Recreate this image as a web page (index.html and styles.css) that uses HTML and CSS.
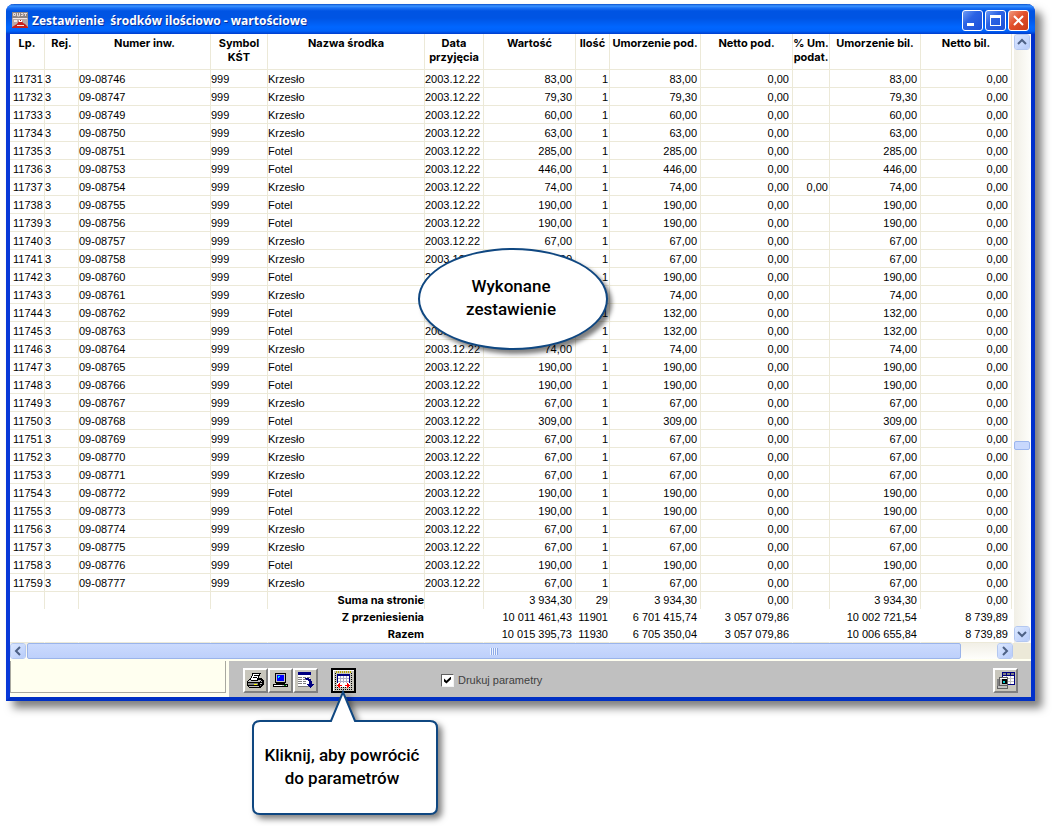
FILE: index.html
```html
<!DOCTYPE html>
<html lang="pl">
<head>
<meta charset="utf-8">
<title>Zestawienie środków ilościowo - wartościowe</title>
<link rel="stylesheet" href="styles.css">
</head>
<body>
<main class="window">
  <header class="titlebar">
    <svg class="app-icon" width="16" height="16" viewBox="0 0 16 16" aria-hidden="true">
      <path fill="#b9aaa8" d="M0 0h16v16H0z"/><path fill="#8e8583" d="M0 0h16v6H0z"/>
      <path fill="none" stroke="#e8dcda" d="M1.500 1.500h2v2h-2zM5.500 1v3h2V1M9 1.500h2v2H9M12 1.500h3M13.500 1v3"/>
      <path fill="#c8201c" d="M0 16v-1l5-3 2-3h3l1 2 2 1 3 3v1z"/><path fill="#f4e8e6" d="M1 6h14v1H1zM2 8h3v2H2zM5 13h7v1H5z"/><path fill="#fff" d="M7 8h3v2H7z"/><path fill="#b51512" d="M8 8h1v1H8z"/>
    </svg>
    <h1 class="title">Zestawienie&nbsp; środków ilościowo - wartościowe</h1>
    <div class="window-controls">
      <button class="control" type="button" aria-label="Minimalizuj"><svg width="19" height="19" viewBox="0 0 19 19"><path fill="#fff" d="M4 12h7v3H4z"/></svg></button>
      <button class="control" type="button" aria-label="Maksymalizuj"><svg width="19" height="19" viewBox="0 0 19 19"><path fill="#fff" fill-rule="evenodd" d="M4 4h11v11H4zM5 7v7h9V7z"/></svg></button>
      <button class="control control-close" type="button" aria-label="Zamknij"><svg width="19" height="19" viewBox="0 0 19 19"><path stroke="#fff" stroke-width="2" d="M5 5l9 9M14 5l-9 9"/></svg></button>
    </div>
  </header>
  <section class="content">
    <div class="report">
      <table class="grid">
        <colgroup><col class="w-lp"><col class="w-rej"><col class="w-num"><col class="w-sym"><col class="w-name"><col class="w-date"><col class="w-wide"><col class="w-qty"><col class="w-sum"><col class="w-wide"><col class="w-pct"><col class="w-sum"><col class="w-sum"></colgroup>
        <thead>
          <tr><th>Lp.</th><th>Rej.</th><th>Numer inw.</th><th>Symbol KŚT</th><th>Nazwa środka</th><th>Data przyjęcia</th><th>Wartość</th><th>Ilość</th><th>Umorzenie pod.</th><th>Netto pod.</th><th>% Um. podat.</th><th>Umorzenie bil.</th><th>Netto bil.</th></tr>
        </thead>
        <tbody>
          <tr><td>11731<td>3<td>09-08746<td>999<td>Krzesło<td>2003.12.22<td>83,00<td>1<td>83,00<td>0,00<td><td>83,00<td>0,00</tr>
          <tr><td>11732<td>3<td>09-08747<td>999<td>Krzesło<td>2003.12.22<td>79,30<td>1<td>79,30<td>0,00<td><td>79,30<td>0,00</tr>
          <tr><td>11733<td>3<td>09-08749<td>999<td>Krzesło<td>2003.12.22<td>60,00<td>1<td>60,00<td>0,00<td><td>60,00<td>0,00</tr>
          <tr><td>11734<td>3<td>09-08750<td>999<td>Krzesło<td>2003.12.22<td>63,00<td>1<td>63,00<td>0,00<td><td>63,00<td>0,00</tr>
          <tr><td>11735<td>3<td>09-08751<td>999<td>Fotel<td>2003.12.22<td>285,00<td>1<td>285,00<td>0,00<td><td>285,00<td>0,00</tr>
          <tr><td>11736<td>3<td>09-08753<td>999<td>Fotel<td>2003.12.22<td>446,00<td>1<td>446,00<td>0,00<td><td>446,00<td>0,00</tr>
          <tr><td>11737<td>3<td>09-08754<td>999<td>Krzesło<td>2003.12.22<td>74,00<td>1<td>74,00<td>0,00<td>0,00<td>74,00<td>0,00</tr>
          <tr><td>11738<td>3<td>09-08755<td>999<td>Fotel<td>2003.12.22<td>190,00<td>1<td>190,00<td>0,00<td><td>190,00<td>0,00</tr>
          <tr><td>11739<td>3<td>09-08756<td>999<td>Fotel<td>2003.12.22<td>190,00<td>1<td>190,00<td>0,00<td><td>190,00<td>0,00</tr>
          <tr><td>11740<td>3<td>09-08757<td>999<td>Krzesło<td>2003.12.22<td>67,00<td>1<td>67,00<td>0,00<td><td>67,00<td>0,00</tr>
          <tr><td>11741<td>3<td>09-08758<td>999<td>Krzesło<td>2003.12.22<td>67,00<td>1<td>67,00<td>0,00<td><td>67,00<td>0,00</tr>
          <tr><td>11742<td>3<td>09-08760<td>999<td>Fotel<td>2003.12.22<td>190,00<td>1<td>190,00<td>0,00<td><td>190,00<td>0,00</tr>
          <tr><td>11743<td>3<td>09-08761<td>999<td>Krzesło<td>2003.12.22<td>74,00<td>1<td>74,00<td>0,00<td><td>74,00<td>0,00</tr>
          <tr><td>11744<td>3<td>09-08762<td>999<td>Fotel<td>2003.12.22<td>132,00<td>1<td>132,00<td>0,00<td><td>132,00<td>0,00</tr>
          <tr><td>11745<td>3<td>09-08763<td>999<td>Fotel<td>2003.12.22<td>132,00<td>1<td>132,00<td>0,00<td><td>132,00<td>0,00</tr>
          <tr><td>11746<td>3<td>09-08764<td>999<td>Krzesło<td>2003.12.22<td>74,00<td>1<td>74,00<td>0,00<td><td>74,00<td>0,00</tr>
          <tr><td>11747<td>3<td>09-08765<td>999<td>Fotel<td>2003.12.22<td>190,00<td>1<td>190,00<td>0,00<td><td>190,00<td>0,00</tr>
          <tr><td>11748<td>3<td>09-08766<td>999<td>Fotel<td>2003.12.22<td>190,00<td>1<td>190,00<td>0,00<td><td>190,00<td>0,00</tr>
          <tr><td>11749<td>3<td>09-08767<td>999<td>Krzesło<td>2003.12.22<td>67,00<td>1<td>67,00<td>0,00<td><td>67,00<td>0,00</tr>
          <tr><td>11750<td>3<td>09-08768<td>999<td>Fotel<td>2003.12.22<td>309,00<td>1<td>309,00<td>0,00<td><td>309,00<td>0,00</tr>
          <tr><td>11751<td>3<td>09-08769<td>999<td>Krzesło<td>2003.12.22<td>67,00<td>1<td>67,00<td>0,00<td><td>67,00<td>0,00</tr>
          <tr><td>11752<td>3<td>09-08770<td>999<td>Krzesło<td>2003.12.22<td>67,00<td>1<td>67,00<td>0,00<td><td>67,00<td>0,00</tr>
          <tr><td>11753<td>3<td>09-08771<td>999<td>Krzesło<td>2003.12.22<td>67,00<td>1<td>67,00<td>0,00<td><td>67,00<td>0,00</tr>
          <tr><td>11754<td>3<td>09-08772<td>999<td>Fotel<td>2003.12.22<td>190,00<td>1<td>190,00<td>0,00<td><td>190,00<td>0,00</tr>
          <tr><td>11755<td>3<td>09-08773<td>999<td>Fotel<td>2003.12.22<td>190,00<td>1<td>190,00<td>0,00<td><td>190,00<td>0,00</tr>
          <tr><td>11756<td>3<td>09-08774<td>999<td>Krzesło<td>2003.12.22<td>67,00<td>1<td>67,00<td>0,00<td><td>67,00<td>0,00</tr>
          <tr><td>11757<td>3<td>09-08775<td>999<td>Krzesło<td>2003.12.22<td>67,00<td>1<td>67,00<td>0,00<td><td>67,00<td>0,00</tr>
          <tr><td>11758<td>3<td>09-08776<td>999<td>Fotel<td>2003.12.22<td>190,00<td>1<td>190,00<td>0,00<td><td>190,00<td>0,00</tr>
          <tr><td>11759<td>3<td>09-08777<td>999<td>Krzesło<td>2003.12.22<td>67,00<td>1<td>67,00<td>0,00<td><td>67,00<td>0,00</tr>
        </tbody>
        <tfoot>
          <tr class="page-sum"><td><td><td><td><th scope="row">Suma na stronie</th><td><td>3 934,30<td>29<td>3 934,30<td>0,00<td><td>3 934,30<td>0,00</tr>
          <tr><td><td><td><td><th scope="row">Z przeniesienia</th><td><td>10 011 461,43<td>11901<td>6 701 415,74<td>3 057 079,86<td><td>10 002 721,54<td>8 739,89</tr>
          <tr><td><td><td><td><th scope="row">Razem</th><td><td>10 015 395,73<td>11930<td>6 705 350,04<td>3 057 079,86<td><td>10 006 655,84<td>8 739,89</tr>
        </tfoot>
      </table>
      <div class="bubble">Wykonane<br>zestawienie</div>
    </div>
    <div class="vscroll">
      <button class="arrow" type="button" aria-label="W górę"><svg width="14" height="14" viewBox="0 0 14 14"><path d="M3 9l4-4 4 4"/></svg></button>
      <div class="vspace-above"></div><div class="vthumb"></div><div class="vspace-below"></div>
      <button class="arrow" type="button" aria-label="W dół"><svg width="14" height="14" viewBox="0 0 14 14"><path d="M3 5l4 4 4-4"/></svg></button>
    </div>
  </section>
  <div class="hscroll">
    <button class="arrow" type="button" aria-label="W lewo"><svg width="14" height="14" viewBox="0 0 14 14"><path d="M9 3L5 7l4 4"/></svg></button>
    <div class="hthumb"><span class="grip"></span></div>
    <div class="hspace"></div>
    <button class="arrow" type="button" aria-label="W prawo"><svg width="14" height="14" viewBox="0 0 14 14"><path d="M5 3l4 4-4 4"/></svg></button>
    <div class="corner"></div>
  </div>
  <footer class="bottom">
    <div class="status"><div class="status-box"></div></div>
    <div class="toolbar">
      <div class="tools">
        <button class="tool" type="button" aria-label="Drukuj"><svg width="21" height="21" viewBox="0 0 21 21" shape-rendering="crispEdges">
          <path fill="#000" d="M7 3h9v1h-1v2h-1v2h3v1h1v1h1v5h-1v1h-1v1h-1v1H4v-1H3v-1H2v-5h1v-1h1V9h1V8h1V6h1z"/>
          <path fill="#fff" d="M8 4h6v1h-1v3h-1v2H6V8h1V6h1z"/><path fill="#000" d="M9 5h4v1H9zM8 7h4v1H8z"/>
          <path fill="#c0c0c0" d="M4 10h2v1h7v-1h3v1h-1v1H3v-1h1zM4 16h10v1H4zM16 11h1v1h-1zM15 13h2v1h-2z"/><path fill="#808080" d="M3 13h10v2H3zM15 15h1v1h-1z"/><path fill="#ff0" d="M9 14h3v1H9z"/>
        </svg></button>
        <button class="tool" type="button" aria-label="Podgląd na ekranie"><svg width="21" height="21" viewBox="0 0 21 21" shape-rendering="crispEdges">
          <path fill="#c0c0c0" stroke="#000" d="M5.500 3.500h10v9h-10z"/><path fill="#00f" d="M7 5h7v6H7z"/><path fill="#0ff" d="M8 6h2v1H8zM8 7h1v1H8z"/>
          <path fill="#c0c0c0" stroke="#000" d="M3.500 14.500h14v2h-14z"/><path fill="#000" d="M6 13h9v1H6z"/><path fill="#fff" d="M4 15h8v1H4z"/><path fill="#008000" d="M14 15h2v1h-2z"/>
        </svg></button>
        <button class="tool" type="button" aria-label="Eksportuj"><svg width="21" height="21" viewBox="0 0 21 21" shape-rendering="crispEdges">
          <path fill="#fff" d="M3 3h12v14H3z"/><path fill="#000080" d="M3 2h13v3H3z"/><path stroke="#808080" d="M3 7.500h4M8 7.500h3M12 7.500h3M3 9.500h4M8 9.500h3M3 11.500h4M8 11.500h3M3 13.500h4M8 13.500h3M3 16.500h12"/>
          <path fill="#000080" d="M10 8h4v1h2v2h1v3h2v1h-1v1h-1v1h-1v1h-1v-1h-1v-1h-1v-1h-1v-1h2v-3h-1v-1h-2z"/>
        </svg></button>
      </div>
      <div class="return">
        <button class="tool tool-default" type="button" aria-label="Powrót do parametrów"><svg width="19" height="19" viewBox="0 0 19 19" shape-rendering="crispEdges">
          <path stroke="#000" stroke-dasharray="1 1" fill="none" d="M1.500 2v16M17.500 2v16M1 16.500h17M1 18.500h17"/><path stroke="#b8a800" stroke-width="2" stroke-dasharray="1 1" d="M2 1h15"/>
          <path fill="#fff" stroke="#000080" d="M3.500 3.500h12v12h-12z"/><path fill="#000080" d="M3 3h13v2H3z"/><path stroke="#b0b0c8" d="M6.500 5v10M9.500 5v10M12.500 5v10M4 7.500h11M4 10.500h11"/>
          <path fill="#fff" d="M3 12h13v4H3z"/><path fill="#f00" d="M3 14h1v-1h1v-1h1v2h2v1H6v2H5v-1H4v-1H3zM16 14h-1v-1h-1v-1h-1v2h-2v1h2v2h1v-1h1v-1h1z"/>
        </svg></button>
        <div class="callout">
          <svg class="callout-shape" width="188" height="126" viewBox="0 0 188 126" aria-hidden="true"><path fill="#fff" stroke="#0f4781" stroke-width="2" d="M9 31H80L92 2l12 29h75q7 0 7 7v79q0 7-7 7H9q-7 0-7-7V38q0-7 7-7z"/></svg>
          <div class="callout-text">Kliknij, aby powrócić<br>do parametrów</div>
        </div>
      </div>
      <label class="check"><input type="checkbox" checked>Drukuj parametry</label>
      <button class="tool tool-last" type="button" aria-label="Zapisz widok"><svg width="21" height="21" viewBox="0 0 21 21" shape-rendering="crispEdges">
        <path fill="#fff" stroke="#000080" d="M7.500 2.500h12v12h-12z"/><path fill="#000080" d="M7 2h13v4H7z"/><path fill="#808080" d="M8 3h3v2H8zM12 3h3v2h-3zM16 3h3v2h-3z"/><path stroke="#c0c0c0" d="M11.500 6v8M15.500 6v8M8 8.500h11M8 11.500h11"/>
        <path fill="#c0c0c0" stroke="#606060" d="M4.500 7.500h8v8h-8zM2.500 15.500h10v3h-10z"/><path fill="#808080" d="M2 9h2v7H2z"/><path fill="#000" d="M7 9h5v5H7z"/><path fill="#0cc" d="M8 11h2v2H8z"/><path fill="#fff" d="M5 8h7v1H5z"/>
      </svg></button>
    </div>
  </footer>
</main>
</body>
</html>
```
FILE: styles.css
```css
* { box-sizing: border-box; }
body {
  margin: 0;
  min-height: 100vh;
  padding: 4px 19px 125px 6px;
  background: #fff;
  color: #000;
  font-family: "Liberation Sans", Arial, sans-serif;
  font-size: 11px;
  line-height: 14px;
}
button { margin: 0; padding: 0; font: inherit; }
svg { display: block; flex: none; }

.window {
  border: 4px solid;
  border-color: #0048e8 #0030cc #0030c4 #0838d8;
  border-top: 0;
  border-radius: 8px 8px 0 0;
  background: #fffff0;
  box-shadow: 7px 7px 8px rgba(0, 0, 0, 0.5);
}
.titlebar {
  display: flex;
  align-items: center;
  height: 30px;
  margin: 0 -4px;
  padding: 2px 6px 0;
  border-radius: 8px 8px 0 0;
  background: linear-gradient(#0a50cc 0, #3a94ff 2px, #1a70f4 4px, #0054e3 7px, #0054e3 14px, #0066ff 23px, #0062fa 27px, #003ccc 30px);
}
.title {
  flex: 1;
  margin: 2px 0 0 4px;
  color: #fff;
  font: bold 12px/16px "Open Sans", "Noto Sans", sans-serif;
  text-shadow: 1px 1px 0 #0a2f9c;
  white-space: nowrap;
}
.window-controls { display: flex; gap: 2px; }
.control {
  width: 21px;
  height: 21px;
  border: 1px solid #fff;
  border-radius: 3px;
  background: linear-gradient(135deg, #6f9cf5, #2b62e4 40%, #1c50d8);
}
.control-close { background: linear-gradient(135deg, #f09a80, #e2502c 45%, #c83c18); }

.content { display: flex; background: #fff; }
.report { position: relative; flex: 1; min-width: 0; }
.grid { width: 100%; table-layout: fixed; border-collapse: separate; border-spacing: 0; }
.w-lp { width: 35px; }
.w-rej, .w-qty { width: 34px; }
.w-num { width: 132px; }
.w-sym { width: 57px; }
.w-name { width: 157px; }
.w-date { width: 59px; }
.w-wide { width: 92px; }
.w-sum { width: 91px; }
.w-pct { width: 37px; }
.grid th, .grid td {
  padding: 0;
  border-right: 1px solid #ece9d8;
  white-space: nowrap;
}
.grid thead th {
  height: 36px;
  padding: 2px 0 0;
  border-bottom: 1px solid #ece9d8;
  font: bold 11px/14px Inter, "Liberation Sans", sans-serif;
  vertical-align: top;
  white-space: normal;
}
.grid tbody td { height: 18px; border-bottom: 1px solid #ece9d8; }
.grid td:first-child { padding-left: 3px; }
.grid td:nth-child(n+7) { padding-right: 3px; text-align: right; }
.grid td:nth-child(8), .grid td:nth-child(11) { padding-right: 1px; }
.grid tfoot td, .grid tfoot th { height: 17px; padding-top: 1px; vertical-align: top; }
.grid tfoot th { text-align: right; font: bold 11px/14px Inter, "Liberation Sans", sans-serif; }
.grid tfoot tr:not(.page-sum) > * { border-right-color: transparent; }
.grid tfoot tr:last-child > * { border-bottom: 1px solid #ece9d8; }

.bubble {
  position: absolute;
  left: 408px;
  top: 214px;
  display: flex;
  align-items: center;
  justify-content: center;
  width: 190px;
  height: 102px;
  padding: 0 4px 2px 0;
  border: 2px solid #0f4781;
  border-radius: 50%;
  background: #fff;
  box-shadow: 4px 4px 4px rgba(0, 0, 0, 0.5);
}
.bubble, .callout-text {
  font: 500 17px/23px Roboto, "Liberation Sans", sans-serif;
  text-align: center;
}

.vscroll {
  display: flex;
  flex-direction: column;
  width: 19px;
  padding: 0 1px 1px 2px;
  background: linear-gradient(90deg, #fff 2px, #f1efe6 2px, #fefefb);
}
.arrow {
  flex: none;
  width: 16px;
  height: 16px;
  border: 1px solid #fff;
  border-radius: 3px;
  outline: 1px solid #b4c8f0;
  outline-offset: -1px;
  background: linear-gradient(135deg, #dce8ff, #b6cbfa);
}
.arrow path { fill: none; stroke: #4d6185; stroke-width: 2; }
.vspace-above { flex: 390; }
.vspace-below { flex: 176; }
.vthumb {
  height: 9px;
  border: 1px solid #9cb6ee;
  border-radius: 2px;
  background: #c8d8fd;
}
.hscroll {
  display: flex;
  height: 16px;
  background: linear-gradient(#f1efe6, #fefefb);
}
.hthumb {
  display: flex;
  align-items: center;
  justify-content: center;
  flex: 933;
  margin-left: 1px;
  border: 1px solid #9ab4ea;
  border-radius: 2px;
  background: linear-gradient(#cbdafd, #bdd0fb);
}
.grip { width: 8px; height: 7px; background: repeating-linear-gradient(90deg, #eef4ff 0 1px, #8caae8 1px 2px); }
.hspace { flex: 36; }
.corner { width: 18px; background: #ece9d8; }

.bottom { display: flex; height: 38px; }
.status { width: 219px; padding: 2px 3px 4px 0; }
.status-box { height: 100%; border: 1px solid #a8a8a0; border-top: 0; }
.toolbar {
  display: flex;
  flex: 1;
  align-items: center;
  margin-top: 2px;
  padding: 2px 13px 0 14px;
  background: #c0c0c0;
}
.tools { display: flex; }
.tool {
  display: flex;
  align-items: center;
  justify-content: center;
  width: 25px;
  height: 25px;
  border: 2px solid;
  border-color: #fff #808080 #808080 #fff;
  background: #c8c6bc;
}
.return { position: relative; margin-left: 13px; }
.tool-default { border: 2px solid #000; box-shadow: inset 1px 1px 0 #fff; }
.callout { position: absolute; left: -80px; top: 22px; width: 188px; height: 126px; padding: 54px 6px 0 0; }
.callout-shape { position: absolute; left: 0; top: 0; overflow: visible; filter: drop-shadow(4px 4px 3px rgba(0, 0, 0, 0.5)); }
.callout-text { position: relative; white-space: nowrap; }
.check { display: flex; align-items: center; gap: 4px; margin-left: 85px; color: #404040; }
.check input {
  appearance: none;
  width: 13px;
  height: 13px;
  margin: 0;
  border: 1px solid;
  border-color: #606060 #f4f4f4 #f4f4f4 #606060;
  background: #fff;
}
.check input:checked::before {
  content: "";
  display: block;
  width: 7px;
  height: 7px;
  margin: 2px;
  background: #000;
  clip-path: polygon(0 30%, 35% 60%, 100% 0, 100% 40%, 35% 100%, 0 70%);
}
.tool-last { margin-left: auto; }
```
